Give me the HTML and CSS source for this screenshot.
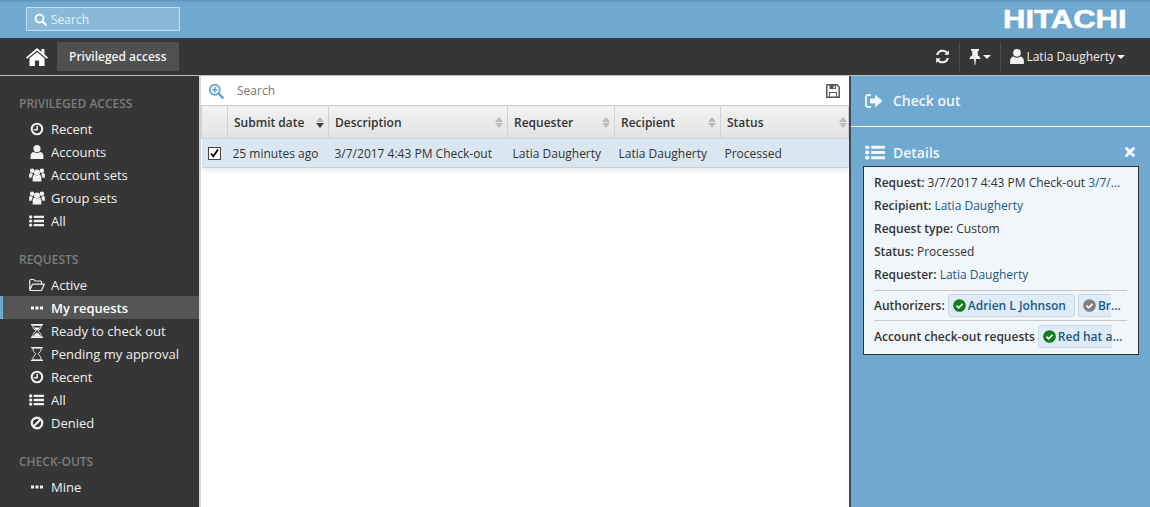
FILE: index.html
```html
<!DOCTYPE html>
<html lang="en">
<head>
<meta charset="UTF-8" />
<title>Privileged access</title>
<link rel="stylesheet" href="styles.css">
</head>
<body>

<!-- Icon set -->
<svg class="icon-defs" width="0" height="0">
  <symbol id="i-clock" viewBox="0 0 16 16"><circle cx="8" cy="8" r="6" fill="none" stroke="currentColor" stroke-width="2.4"/><path d="M8.200 4.200V8.800H4.600" fill="none" stroke="currentColor" stroke-width="1.700"/></symbol>
  <symbol id="i-user" viewBox="1.600 1 12.800 14"><circle cx="8" cy="4.600" r="3.600" fill="currentColor"/><path d="M1.600 15v-3c0-2.500 1.600-4 3.400-4 1 .8 1.900 1.100 3 1.100S10 8.800 11 8c1.800 0 3.400 1.500 3.400 4v3z" fill="currentColor"/></symbol>
  <symbol id="i-group" viewBox="0 0 18 16"><circle cx="9" cy="5" r="3.400" fill="currentColor"/><circle cx="3.400" cy="3.200" r="2.600" fill="currentColor"/><circle cx="14.600" cy="3.200" r="2.600" fill="currentColor"/><path d="M4 15.500v-4.500c0-2.200 1.200-3.300 2.500-3.300.8.600 1.600.9 2.500.9s1.700-.3 2.500-.9c1.300 0 2.500 1.100 2.500 3.300v4.500z" fill="currentColor"/><path d="M0 11V7.500C0 6.300.8 5.700 1.800 5.700c.5.400 1.100.6 1.800.6.100.7.500 1.100 1 1.300C3.300 8 2.900 9.500 2.900 11zM18 11V7.500c0-1.200-.8-1.800-1.800-1.800-.5.400-1.100.6-1.800.6-.1.700-.5 1.100-1 1.300 1.300.4 1.700 1.900 1.700 3.400z" fill="currentColor"/></symbol>
  <symbol id="i-list" viewBox="0 0 16 14" preserveAspectRatio="none"><path d="M5 .8h11v2.800H5zM5 5.600h11v2.800H5zM5 10.400h11v2.800H5z" fill="currentColor"/><circle cx="1.800" cy="2.200" r="1.800" fill="currentColor"/><circle cx="1.800" cy="7" r="1.800" fill="currentColor"/><circle cx="1.800" cy="11.800" r="1.800" fill="currentColor"/></symbol>
  <symbol id="i-folder" viewBox="0 0 16 14"><path d="M.8 12V2.500c0-.6.4-1 1-1h3l1.200 1.500h5.500c.6 0 1 .4 1 1v1.500M.8 12l2.700-5.800h11.700L12.500 12.500H1.300z" fill="none" stroke="currentColor" stroke-width="1.200" stroke-linejoin="round"/></symbol>
  <symbol id="i-dots" viewBox="0 0 14 4"><path d="M1 .5h3v3H1zM5.500 .5h3v3h-3zM10 .5h3v3h-3z" fill="currentColor"/></symbol>
  <symbol id="i-hourglass" viewBox="0 0 12 16" preserveAspectRatio="none"><path d="M0 0h12v1.600H0zM0 14.400h12V16H0z" fill="currentColor"/><path d="M1.800 1.500c0 3.500 1.700 5 3.100 6.500-1.400 1.500-3.100 3-3.100 6.500h8.400c0-3.500-1.700-5-3.100-6.500 1.400-1.500 3.100-3 3.100-6.500z" fill="none" stroke="currentColor" stroke-width="1"/><path d="M3 4h6c-.5 1.700-2 2.800-3 3.700-1-.9-2.500-2-3-3.700zM2.800 14c.3-1.900 1.700-3.500 3.200-4.300 1.500.8 2.900 2.400 3.200 4.300z" fill="currentColor"/></symbol>
  <symbol id="i-hourglass-o" viewBox="0 0 12 16" preserveAspectRatio="none"><path d="M0 0h12v1.300H0zM0 14.700h12V16H0z" fill="currentColor"/><path d="M1.800 1.200c0 3.500 1.700 5.300 3.100 6.800-1.400 1.500-3.100 3.300-3.100 6.800h8.400c0-3.500-1.700-5.300-3.100-6.800 1.400-1.500 3.100-3.300 3.100-6.800z" fill="none" stroke="currentColor" stroke-width="1"/></symbol>
  <symbol id="i-ban" viewBox="0 0 16 16"><circle cx="8" cy="8" r="6" fill="none" stroke="currentColor" stroke-width="2.600"/><path d="M4 12l8-8" stroke="currentColor" stroke-width="2.600"/></symbol>
  <symbol id="i-home" viewBox="0 0 22 18"><path d="M11 0L0 9.400l1.200 1.400L11 2.500l9.800 8.300 1.200-1.400-3.600-3.100V1h-3v3.100z" fill="currentColor"/><path d="M11 4L3.500 10.300V18h5.400v-5.400h4.200V18h5.400v-7.700z" fill="currentColor"/></symbol>
  <symbol id="i-refresh" viewBox="0 0 16 16"><path d="M14.800 1.200v5h-5l1.900-1.900C10.700 3.500 9.500 3 8.100 3 6 3 4.100 4.300 3.500 6.500H1.200C1.900 3 4.700.8 8.100.8c2 0 3.800.8 5.100 2.100zM1.200 14.800v-5h5l-1.900 1.900c1 .9 2.300 1.400 3.600 1.400 2.100 0 4-1.300 4.600-3.500h2.300c-.7 3.500-3.500 5.700-6.900 5.700-2 0-3.800-.8-5.100-2.100z" fill="currentColor"/></symbol>
  <symbol id="i-pin" viewBox="0 0 12 16"><path d="M2 0h8v1.400L8.800 2.200v4.200c1.500.7 2.700 1.900 2.700 3.600H7l-.7 6h-.6l-.7-6H.5c0-1.700 1.200-2.900 2.700-3.600V2.200L2 1.400z" fill="currentColor"/></symbol>
  <symbol id="i-signout" viewBox="0 0 18 16"><path d="M6 2H3C1.900 2 1 2.900 1 4v8c0 1.100.9 2 2 2h3" fill="none" stroke="currentColor" stroke-width="1.800"/><path d="M5 5.500h5V1.500L17.500 8 10 14.500v-4H5z" fill="currentColor"/></symbol>
  <symbol id="i-close" viewBox="0 0 12 12"><path d="M2 2l8 8M10 2l-8 8" stroke="currentColor" stroke-width="3.600" stroke-linecap="round"/></symbol>
  <symbol id="i-search" viewBox="0 0 16 16"><circle cx="6.800" cy="6.800" r="4.900" fill="none" stroke="currentColor" stroke-width="2.200"/><path d="M10.500 10.500l4 4" stroke="currentColor" stroke-width="2.800" stroke-linecap="round"/></symbol>
  <symbol id="i-zoom" viewBox="0 0 16 16"><circle cx="6.800" cy="6.800" r="5" fill="none" stroke="currentColor" stroke-width="1.900"/><path d="M4 6.800h5.600M6.800 4v5.600" stroke="currentColor" stroke-width="1.600"/><path d="M10.700 10.700l4 4" stroke="currentColor" stroke-width="2.600" stroke-linecap="round"/></symbol>
  <symbol id="i-save" viewBox="0 0 14 14"><path d="M1 .8h10l2.200 2.200v10.200H.8V1z" fill="none" stroke="currentColor" stroke-width="1.500"/><path d="M3.500 1h6.500v4H3.500zM3 8h8v5H3z" fill="currentColor"/><path d="M7.500 1.800h1.300v2.400H7.500z" fill="#fff"/><path d="M4 9h6v3.500H4z" fill="#fff"/></symbol>
  <symbol id="i-check" viewBox="0 0 16 16"><circle cx="8" cy="8" r="7.800" fill="currentColor"/><path d="M4.300 8.200l2.600 2.600 4.800-4.900" fill="none" stroke="#fff" stroke-width="2.200"/></symbol>
</svg>

<header class="topbar">
  <div class="global-search">
    <svg class="ic ic-search"><use href="#i-search"/></svg>
    <span>Search</span>
  </div>
  <div class="logo">HITACHI</div>
</header>

<nav class="navbar">
  <svg class="ic ic-home"><use href="#i-home"/></svg>
  <a class="nav-tab">Privileged access</a>
  <div class="nav-tools">
    <div class="tool"><svg class="ic ic-refresh"><use href="#i-refresh"/></svg></div>
    <div class="tool tool-pin"><svg class="ic ic-pin"><use href="#i-pin"/></svg><span class="caret"></span></div>
    <div class="tool tool-user"><svg class="ic ic-user-top"><use href="#i-user"/></svg><span>Latia Daugherty</span><span class="caret"></span></div>
  </div>
</nav>

<div class="layout">

  <aside class="sidebar">
    <h4 class="side-head">PRIVILEGED ACCESS</h4>
    <ul class="side-list">
      <li><svg class="ic"><use href="#i-clock"/></svg>Recent</li>
      <li><svg class="ic"><use href="#i-user"/></svg>Accounts</li>
      <li><svg class="ic ic-group"><use href="#i-group"/></svg>Account sets</li>
      <li><svg class="ic ic-group"><use href="#i-group"/></svg>Group sets</li>
      <li><svg class="ic ic-list"><use href="#i-list"/></svg>All</li>
    </ul>
    <h4 class="side-head">REQUESTS</h4>
    <ul class="side-list">
      <li><svg class="ic ic-folder"><use href="#i-folder"/></svg>Active</li>
      <li class="current"><svg class="ic ic-dots"><use href="#i-dots"/></svg>My requests</li>
      <li><svg class="ic ic-hour"><use href="#i-hourglass"/></svg>Ready to check out</li>
      <li><svg class="ic ic-hour"><use href="#i-hourglass-o"/></svg>Pending my approval</li>
      <li><svg class="ic"><use href="#i-clock"/></svg>Recent</li>
      <li><svg class="ic ic-list"><use href="#i-list"/></svg>All</li>
      <li><svg class="ic"><use href="#i-ban"/></svg>Denied</li>
    </ul>
    <h4 class="side-head">CHECK-OUTS</h4>
    <ul class="side-list">
      <li><svg class="ic ic-dots"><use href="#i-dots"/></svg>Mine</li>
    </ul>
  </aside>

  <main class="content">
    <div class="grid-search">
      <svg class="ic ic-zoom"><use href="#i-zoom"/></svg>
      <span class="grid-search-text">Search</span>
      <svg class="ic ic-save"><use href="#i-save"/></svg>
    </div>
    <table class="grid">
      <colgroup>
        <col class="c-check"><col class="c-date"><col class="c-desc"><col class="c-req"><col class="c-rec"><col class="c-status">
      </colgroup>
      <thead>
        <tr>
          <th></th>
          <th><div class="th-in">Submit date<span class="sort sort-desc"></span></div></th>
          <th><div class="th-in">Description<span class="sort"></span></div></th>
          <th><div class="th-in">Requester<span class="sort"></span></div></th>
          <th><div class="th-in">Recipient<span class="sort"></span></div></th>
          <th><div class="th-in">Status<span class="sort"></span></div></th>
        </tr>
      </thead>
      <tbody>
        <tr>
          <td class="td-check"><span class="checkbox"><svg viewBox="0 0 14 14"><path d="M2.500 7l3 3.500L11.500 2" fill="none" stroke="#000" stroke-width="2.400"/></svg></span></td>
          <td>25 minutes ago</td>
          <td class="td-desc">3/7/2017 4:43 PM Check-out</td>
          <td>Latia Daugherty</td>
          <td class="td-tight">Latia Daugherty</td>
          <td class="td-tight">Processed</td>
        </tr>
      </tbody>
    </table>
  </main>

  <aside class="panel">
    <div class="action"><svg class="ic ic-signout"><use href="#i-signout"/></svg>Check out</div>
    <div class="details-head">
      <svg class="ic ic-details"><use href="#i-list"/></svg>
      <span>Details</span>
      <svg class="ic ic-close"><use href="#i-close"/></svg>
    </div>
    <div class="details">
      <div class="line"><b>Request:</b> 3/7/2017 4:43 PM Check-out <a>3/7/...</a></div>
      <div class="line"><b>Recipient:</b> <a>Latia Daugherty</a></div>
      <div class="line"><b>Request type:</b> Custom</div>
      <div class="line"><b>Status:</b> Processed</div>
      <div class="line"><b>Requester:</b> <a>Latia Daugherty</a></div>
      <div class="line-tags">
        <b>Authorizers:</b>
        <span class="tag"><svg class="ic ic-ok"><use href="#i-check"/></svg>Adrien L Johnson</span>
        <span class="tag tag-short tag-grey"><svg class="ic ic-ok"><use href="#i-check"/></svg>Br...</span>
      </div>
      <div class="line-tags">
        <b>Account check-out requests</b>
        <span class="tag tag-long"><svg class="ic ic-ok"><use href="#i-check"/></svg>Red hat a...</span>
      </div>
    </div>
  </aside>

</div>

</body>
</html>
```

FILE: styles.css
```css
/* Reset and base */
* {
  box-sizing: border-box;
}
html, body {
  height: 100%;
}
body {
  margin: 0;
  font-family: "Open Sans", "Liberation Sans", sans-serif;
  font-size: 12px;
  color: #333;
  background: #fff;
  overflow: hidden;
}
.icon-defs {
  position: absolute;
}
.ic {
  display: block;
  flex: none;
}

/* Top blue bar */
.topbar {
  height: 38px;
  background: linear-gradient(#5f93b6 0, #70a9cf 3px);
  display: flex;
  align-items: center;
  justify-content: space-between;
  padding: 0 23px 0 26px;
}
.global-search {
  width: 154px;
  height: 24px;
  border: 1px solid #c5dcec;
  background: #8ab9d8;
  color: #e6f0f7;
  display: flex;
  align-items: center;
  gap: 4px;
  padding-left: 7px;
}
.ic-search {
  width: 13px;
  height: 13px;
  color: #fff;
}
.logo {
  font-family: "Liberation Sans", sans-serif;
  font-weight: 700;
  font-size: 25px;
  line-height: 18px;
  color: #fff;
  -webkit-text-stroke: 0.5px #fff;
  transform: scaleX(1.24);
  transform-origin: right center;
}

/* Dark nav bar */
.navbar {
  height: 37px;
  background: #363636;
  display: flex;
  align-items: center;
  padding: 0 25px 0 26px;
  color: #fff;
}
.ic-home {
  width: 22px;
  height: 18px;
  margin-right: 9px;
}
.nav-tab {
  background: #505050;
  height: 29px;
  line-height: 29px;
  padding: 0 12px;
  font-weight: 600;
  color: #f2f2f2;
}
.nav-tools {
  margin-left: auto;
  display: flex;
  align-items: center;
}
.tool {
  height: 29px;
  display: flex;
  align-items: center;
  padding: 0 9px;
  border-left: 1px solid #4e4e4e;
  color: #f0f0f0;
}
.tool:first-child {
  border-left: 0;
}
.tool-user {
  padding-right: 0;
}
.ic-refresh {
  width: 15px;
  height: 15px;
}
.ic-pin {
  width: 12px;
  height: 16px;
}
.ic-user-top {
  width: 14px;
  height: 15px;
  margin-right: 2px;
}
.caret {
  width: 0;
  height: 0;
  margin-left: 2px;
  border-left: 4px solid transparent;
  border-right: 4px solid transparent;
  border-top: 4px solid #f0f0f0;
}

/* Page columns */
.layout {
  display: flex;
  height: 432px;
  border-top: 1px solid #bdbdbd;
}

/* Left menu */
.sidebar {
  width: 199px;
  flex: none;
  background: #363636;
  color: #f0f0f0;
  padding-top: 18px;
}
.side-head {
  margin: 0 0 3px 19px;
  font-size: 12px;
  line-height: 20px;
  font-weight: 600;
  color: #7c7c7c;
}
.side-list {
  list-style: none;
  margin: 0 0 18px;
  padding: 0;
}
.side-list li {
  height: 23px;
  display: flex;
  align-items: center;
  padding-left: 30px;
  font-size: 13px;
}
.side-list .ic {
  width: 14px;
  height: 14px;
  margin-right: 7px;
}
.side-list .ic-dots {
  height: 4px;
}
.side-list .ic-group {
  width: 16px;
  margin-left: -1px;
  margin-right: 6px;
}
.side-list .ic-list {
  width: 15px;
  height: 12px;
  margin-left: -1px;
}
.side-list .ic-folder {
  width: 16px;
  margin-left: -1px;
  margin-right: 6px;
}
.side-list .ic-hour {
  width: 12px;
  margin-left: 1px;
  margin-right: 8px;
}
.side-list li.current {
  background: #555;
  border-left: 3px solid #70a9cf;
  padding-left: 27px;
  font-weight: 600;
  color: #fff;
}

/* Centre grid */
.content {
  flex: 1;
  min-width: 0;
  background: #fff;
  border-left: 2px solid #d8d8d8;
}
.grid-search {
  height: 29px;
  display: flex;
  align-items: center;
  padding: 0 9px 0 7px;
}
.ic-zoom {
  width: 16px;
  height: 16px;
  color: #6ba6cd;
}
.grid-search-text {
  margin-left: 13px;
  color: #777;
}
.ic-save {
  width: 14px;
  height: 14px;
  margin-left: auto;
  color: #555;
}
.grid {
  width: 647px;
  table-layout: fixed;
  border-collapse: collapse;
  box-shadow: 0 3px 4px rgba(0, 0, 0, 0.08);
}
.c-check { width: 26px; }
.c-date { width: 101px; }
.c-desc { width: 179px; }
.c-req { width: 107px; }
.c-rec { width: 106px; }
.c-status { width: 128px; }
.grid th {
  height: 33px;
  padding: 0;
  text-align: left;
  font-weight: 600;
  color: #333;
  background: linear-gradient(#f3f3f3, #e2e2e2);
  border: 1px solid #d0d0d0;
}
.th-in {
  display: flex;
  align-items: center;
  justify-content: space-between;
  padding: 0 3px 0 6px;
}
.sort {
  position: relative;
  width: 8px;
  height: 11px;
  margin-right: 1px;
}
th:last-child .sort {
  margin-right: -2px;
}
.sort:before,
.sort:after {
  content: "";
  position: absolute;
  left: 0;
  border-left: 4px solid transparent;
  border-right: 4px solid transparent;
}
.sort:before {
  top: 0;
  border-bottom: 5px solid #bbb;
}
.sort:after {
  bottom: 0;
  border-top: 5px solid #bbb;
}
.sort-desc:after {
  border-top-color: #444;
}
.grid td {
  height: 29px;
  padding: 0 5px;
  background: #dae7f1;
  border-bottom: 1px solid #c9d1d7;
  color: #333;
  white-space: nowrap;
}
.grid td.td-check {
  padding: 0 0 0 6px;
}
.grid td.td-desc {
  padding-left: 6px;
}
.grid td.td-tight {
  padding-left: 4px;
}
.checkbox {
  display: block;
  width: 13px;
  height: 13px;
  background: #fff;
  border: 1px solid #444;
}
.checkbox svg {
  display: block;
  width: 11px;
  height: 11px;
}

/* Right panel */
.panel {
  width: 301px;
  flex: none;
  background: #70a9cf;
  border-left: 2px solid #3d4a54;
  color: #fff;
}
.action {
  height: 51px;
  display: flex;
  align-items: center;
  padding: 0 0 1px 14px;
  gap: 10px;
  font-size: 14px;
  font-weight: 600;
  border-bottom: 1px solid #fff;
  color: #f0f6fa;
}
.ic-signout {
  width: 18px;
  height: 16px;
}
.details-head {
  height: 39px;
  display: flex;
  align-items: center;
  padding: 11px 15px 0 14px;
  font-size: 14px;
  font-weight: 600;
  color: #f0f6fa;
}
.ic-details {
  width: 20px;
  height: 15px;
  margin-right: 8px;
}
.ic-close {
  width: 10px;
  height: 10px;
  margin-left: auto;
}
.details {
  width: 276px;
  height: 189px;
  margin-left: 12px;
  background: #f1f6fb;
  border: 1px solid #333;
  padding: 4px 10px 0;
  color: #333;
}
.details b {
  font-weight: 600;
}
.details a {
  color: #1a5a86;
}
.line {
  height: 23px;
  line-height: 23px;
  white-space: nowrap;
}
.line-tags {
  margin-right: 1px;
  padding-top: 1px;
  height: 30px;
  border-top: 1px solid #c9c9c9;
  display: flex;
  align-items: center;
  gap: 3px;
  white-space: nowrap;
}
.line + .line-tags {
  margin-top: 4px;
  padding-top: 0;
}
.tag {
  height: 23px;
  display: inline-flex;
  align-items: center;
  gap: 2px;
  padding: 0 8px 0 4px;
  background: #dfecf5;
  border: 1px solid #c5dbe9;
  border-radius: 3px;
  color: #1a5a86;
  font-weight: 600;
}
/* Cut-off names: the dots run out past the tag, as in the app */
.tag-short,
.tag-long {
  padding-right: 0;
  border-right: 0;
  border-radius: 3px 0 0 3px;
}
.tag-short {
  width: 33px;
}
.tag-long {
  width: 74px;
}
.ic-ok {
  width: 13px;
  height: 13px;
  color: #0f7f1a;
}
.tag-grey .ic-ok {
  color: #808080;
}
```
